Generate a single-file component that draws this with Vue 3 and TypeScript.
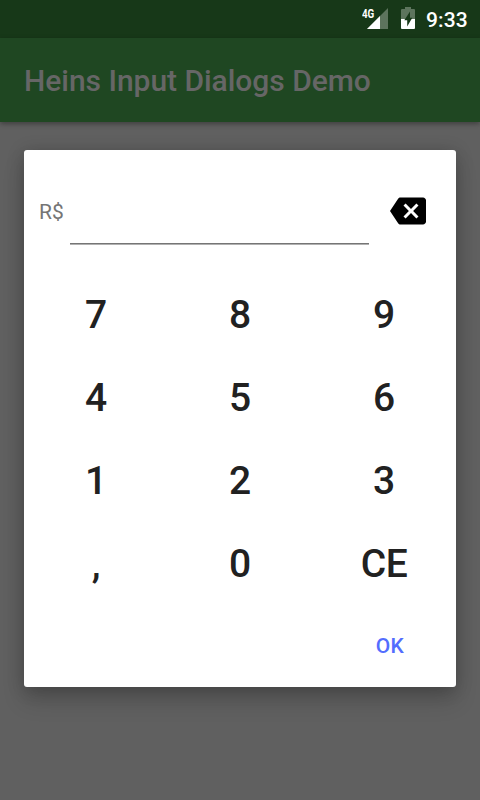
<script setup lang="ts">
import { ref } from 'vue'

const keys: string[] = ['7', '8', '9', '4', '5', '6', '1', '2', '3', ',', '0', 'CE']
const amount = ref<string>('')

function press(key: string): void {
  amount.value = key === 'CE' ? '' : amount.value + key
}

function erase(): void {
  amount.value = amount.value.slice(0, -1)
}
</script>

<template>
  <div class="screen">
    <header class="status">
      <svg class="signal" width="28" height="24" viewBox="0 0 28 24">
        <path d="M26 2V23H5Z" fill="#fff" fill-opacity=".3" />
        <path d="M18 10V23H5Z" fill="#fff" />
        <rect x="0" y="2" width="13.5" height="11" fill="#173818" />
        <text class="network" x="0" y="11.8" textLength="12.3" lengthAdjust="spacingAndGlyphs">4G</text>
      </svg>
      <svg class="battery" width="14" height="22" viewBox="0 0 14 22">
        <path d="M4 0H10V2H13Q14 2 14 3V12H0V3Q0 2 1 2H4Z" fill="#fff" fill-opacity=".3" />
        <path d="M0 12H14V21Q14 22 13 22H1Q0 22 0 21Z" fill="#fff" />
        <path d="M9 4.5L3.3 13.2H6.2V19.5L11.3 10.7H9Z" fill="#173818" />
      </svg>
      <span class="clock">9:33</span>
    </header>
    <div class="toolbar"><h1>Heins Input Dialogs Demo</h1></div>
    <main class="content">
      <section class="dialog">
        <div class="entry">
          <span class="currency">R$</span>
          <div class="field">{{ amount }}</div>
          <button class="erase" aria-label="Backspace" @click="erase">
            <svg width="36" height="36" viewBox="0 0 24 24">
              <path d="M22 3H7c-.69 0-1.23.35-1.59.88L0 12l5.41 8.11c.36.53.9.89 1.59.89h15c1.1 0 2-.9 2-2V5c0-1.1-.9-2-2-2zm-3 12.59L17.59 17 14 13.41 10.41 17 9 15.59 12.59 12 9 8.41 10.41 7 14 10.59 17.59 7 19 8.41 15.41 12 19 15.59z" />
            </svg>
          </button>
        </div>
        <div class="keypad">
          <button v-for="key in keys" :key="key" class="key" @click="press(key)">{{ key }}</button>
        </div>
        <div class="actions"><button class="ok">OK</button></div>
      </section>
    </main>
  </div>
</template>

<style>
body {
  margin: 0;
}
</style>

<style scoped>
.screen {
  width: 480px;
  height: 800px;
  display: flex;
  flex-direction: column;
  overflow: hidden;
  background: #606060;
  font-family: Roboto, "Liberation Sans", sans-serif;
}
button {
  border: 0;
  padding: 0;
  background: none;
  font-family: inherit;
}
svg {
  display: block;
}
.status {
  height: 38px;
  box-sizing: border-box;
  flex: none;
  display: flex;
  align-items: flex-start;
  justify-content: flex-end;
  padding: 6px 12px 0 0;
  background: #173818;
  color: #fff;
}
.network {
  font-size: 13.5px;
  font-weight: 700;
  fill: #fff;
}
.battery {
  margin: 1px 11px 0 11px;
}
.clock {
  width: 42px;
  font-size: 21px;
  font-weight: 500;
  line-height: 28px;
  letter-spacing: .15px;
  white-space: nowrap;
}
.toolbar {
  height: 84px;
  box-sizing: border-box;
  flex: none;
  display: flex;
  align-items: center;
  padding: 2px 0 0 24px;
  background: #1f4722;
  box-shadow: 0 2px 5px rgba(0, 0, 0, .35);
}
h1 {
  margin: 0;
  font-size: 30px;
  font-weight: 500;
  line-height: 36px;
  letter-spacing: -.03px;
  color: #666;
}
.content {
  padding: 28px 24px 0;
}
.dialog {
  height: 537px;
  display: flex;
  flex-direction: column;
  border-radius: 3px;
  background: #fff;
  box-shadow: 0 14px 22px rgba(0, 0, 0, .16), 0 2px 18px rgba(0, 0, 0, .2);
}
.entry {
  height: 123px;
  box-sizing: border-box;
  display: flex;
  align-items: flex-start;
  padding: 43px 30px 0 15px;
}
.currency {
  width: 31px;
  font-size: 21px;
  line-height: 39px;
  color: #757575;
}
.field {
  width: 299px;
  height: 51px;
  box-sizing: border-box;
  border-bottom: 1px solid #757575;
  box-shadow: 0 1px #b0b0b0;
  font-size: 27px;
  line-height: 36px;
  color: #212121;
}
.erase {
  margin-left: auto;
}
.keypad {
  display: grid;
  grid-template-columns: repeat(3, 144px);
  grid-auto-rows: 83px;
}
.key {
  font-size: 39px;
  font-weight: 500;
  letter-spacing: -.4px;
  color: #212121;
}
.actions {
  display: flex;
  justify-content: flex-end;
  padding: 14px 12px 0 0;
}
.ok {
  width: 108px;
  height: 54px;
  font-size: 21px;
  font-weight: 500;
  letter-spacing: .4px;
  color: #536dfe;
}
</style>
